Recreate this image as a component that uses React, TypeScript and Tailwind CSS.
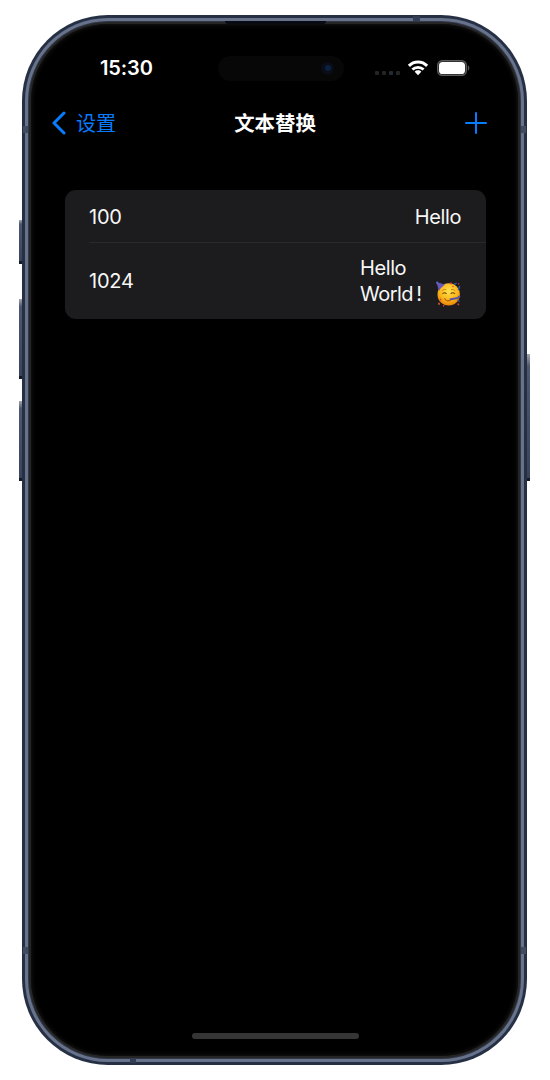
import React from 'react';

function WifiIcon() {
  return (
    <svg className="h-[16px] w-[22px]" viewBox="0 0 22 16" fill="none" stroke="#fff" strokeWidth="3">
      <path d="M1.9 5.9C7 .7 15 .7 20.1 5.9" />
      <path d="M5.4 9.6C8.5 6.5 13.5 6.5 16.6 9.6" strokeWidth="2.8" />
      <path d="M11 10.3c1.3 0 2.5.5 3.3 1.4L11 15.2l-3.3-3.5c.8-.9 2-1.4 3.3-1.4Z" fill="#fff" stroke="none" />
    </svg>
  );
}

function Battery() {
  return (
    <svg className="h-[16px] w-[33px]" viewBox="0 0 33 16">
      <rect x=".75" y=".75" width="28.5" height="14.5" rx="4.6" fill="#111" stroke="#5b5b5d" strokeWidth="1.5" />
      <rect x="2" y="2" width="26" height="12" rx="3.6" fill="#fff" />
      <path d="M30.8 5.3c2 .7 2 4.7 0 5.4Z" fill="#5b5b5d" />
    </svg>
  );
}

function PartyFace() {
  return (
    <svg className="h-[26px] w-[26px]" viewBox="0 0 26 26">
      <defs>
        <radialGradient id="face" cx=".5" cy=".35" r=".65">
          <stop offset="0" stopColor="#ffe04e" />
          <stop offset=".6" stopColor="#fbb91c" />
          <stop offset="1" stopColor="#e98208" />
        </radialGradient>
      </defs>
      <circle cx="12.7" cy="13.4" r="11.2" fill="url(#face)" />
      <path d="M.4 1.2 9.2 3.6C7 5 4.5 7.2 3 9.9Z" fill="#7354b5" />
      <path d="m1.5 3.6 3-1.3M2.3 6.8l4.6-3.5" stroke="#4b65bd" strokeWidth="1" />
      <circle cx="1.3" cy="1.7" r="1.3" fill="#5661b7" />
      <path d="M6.3 9.8c1-1.5 2.7-1.8 4-1M15 8.8c1.5-.8 3-.4 4 1" fill="none" stroke="#b57112" strokeWidth=".8" />
      <path d="M6.5 13c.8-1.6 3-1.6 3.9 0M14.8 13c.9-1.6 3.1-1.6 4 0" fill="none" stroke="#70430b" strokeWidth="1.1" />
      <path d="M8.5 17.2c1.3 2.7 3.8 3.5 5.9 1.8" fill="none" stroke="#b65e0a" strokeWidth="1.1" />
      <path d="m13.8 18.6 8-1.7 2.1-1.9" fill="none" stroke="#5951a1" strokeWidth="2" />
      <path d="m18 3.3 2.6-1.2M23.7 5l-1.4 4M23.5 20.5l-2-1.7" stroke="#35549b" strokeWidth="1.5" />
      <path d="M14 1.5h2v1.7h-2zM22 2.2h1.3v1.3H22zM2 21.7h2v2H2zM7 24h1.3v1.5H7zM21.5 22.5h1.7v1.7h-1.7z" fill="#ce4338" />
      <circle cx="17" cy="5.5" r=".8" fill="#db523c" />
      <circle cx="4.6" cy="18.5" r=".9" fill="#d64e36" />
    </svg>
  );
}

function SideButton({ className }: { className: string }) {
  return (
    <div
      className={`absolute w-[3px] border-b-[3px] border-[#141b29] bg-linear-to-b from-[#a5a6ab] via-[#4b586f] via-10% to-[#38445c] ${className}`}
    />
  );
}

function StatusBar() {
  return (
    <div className="flex h-[28px] items-center pr-[48px] pl-[69px]">
      <div className="w-[118px] text-[20px] font-semibold tracking-[-0.1px]">15:30</div>
      <div className="flex h-[25px] w-[126px] items-center justify-end rounded-full bg-[#070707] pr-[10px]">
        <div className="flex size-[13px] items-center justify-center rounded-full bg-[#0a0d15]">
          <div className="size-[6px] rounded-full bg-[#0b2144]" />
        </div>
      </div>
      <div className="ml-auto flex items-center">
        <div className="mt-[9px] mr-[7px] flex gap-[3px]">
          <i className="size-[4px] rounded-[1px] bg-[#242426]" />
          <i className="size-[4px] rounded-[1px] bg-[#242426]" />
          <i className="size-[4px] rounded-[1px] bg-[#242a35]" />
          <i className="size-[4px] rounded-[1px] bg-[#242426]" />
        </div>
        <WifiIcon />
        <span className="ml-[8px] flex"><Battery /></span>
      </div>
    </div>
  );
}

function NavBar() {
  return (
    <header className="mt-[27px] grid h-[28px] grid-cols-[1fr_auto_1fr] items-center pr-[31px] pl-[21px] text-[20px] leading-none">
      <button className="flex items-center text-[#087cff]">
        <svg className="h-[24px] w-[14px]" viewBox="0 0 14 24" fill="none" stroke="currentColor" strokeWidth="3" strokeLinecap="round" strokeLinejoin="round">
          <path d="M12 2 2 12l10 10" />
        </svg>
        <span className="ml-[10px] pt-[2px]">设置</span>
      </button>
      <h1 className="translate-x-[5.5px] pt-[2px] text-[20.4px] font-bold">文本替换</h1>
      <button className="justify-self-end text-[#087cff]" aria-label="添加">
        <svg className="size-[22px]" viewBox="0 0 22 22" fill="none" stroke="currentColor" strokeWidth="2" strokeLinecap="round">
          <path d="M11 1v20M1 11h20" />
        </svg>
      </button>
    </header>
  );
}

function ReplacementList() {
  return (
    <section className="mr-[32px] ml-[34px] mt-[53px] h-[129px] overflow-hidden rounded-[11px] bg-[#1c1c1e] pl-[24px] text-[20px] tracking-[-0.2px] text-[#f7f7f7]">
      <div className="flex h-[53px] items-center justify-between border-b border-[#29292b] pt-[2px] pr-[25px]">
        <span>100</span>
        <span className="tracking-[-0.4px]">Hello</span>
      </div>
      <div className="flex h-[76px] items-center justify-between pr-[24px]">
        <span>1024</span>
        <div className="w-[102px] leading-[26px]">
          <div className="tracking-[-0.4px]">Hello</div>
          <div className="flex h-[26px] items-center justify-between"><span className="tracking-[-0.5px]">World<span className="ml-[3px]">!</span></span><PartyFace /></div>
        </div>
      </div>
    </section>
  );
}

export default function App() {
  return (
    <div className="relative h-[1080px] w-[550px] overflow-hidden bg-white pt-[15px] pl-[22px] font-['Inter','Noto_Sans_CJK_SC',sans-serif] text-white">
      <SideButton className="top-[220px] left-[19px] h-[44px]" />
      <SideButton className="top-[299px] left-[19px] h-[80px]" />
      <SideButton className="top-[401px] left-[19px] h-[80px]" />
      <SideButton className="top-[354px] left-[527px] h-[127px]" />
      <div className="h-[1050px] w-[505px] rounded-[86px] bg-[#263044] p-[3px]">
        <div className="h-full rounded-[83px] bg-[#68728b] p-[3px]">
          <div className="h-full rounded-[80px] bg-[#30394a] p-px">
            <div className="h-full rounded-[79px] bg-[#252525] p-[2px]">
              <main className="flex h-full flex-col rounded-[77px] bg-black pt-[30px] pb-[17px] shadow-[inset_0_0_5px_#1d1d1d]">
                <StatusBar />
                <NavBar />
                <ReplacementList />
                <div className="mt-auto ml-[1px] h-[6px] w-[167px] self-center rounded-full bg-[#353536]" />
              </main>
            </div>
          </div>
        </div>
      </div>
      <div className="absolute top-[21px] left-[225px] h-[3px] w-[101px] rounded-b bg-[#080b13]" />
      <div className="absolute top-[16px] left-[413px] h-[5px] w-[7px] bg-[#343d51]" />
      <div className="absolute top-[1058px] left-[130px] h-[5px] w-[6px] bg-[#343d51]" />
      <div className="absolute top-[126px] left-[23px] h-[7px] w-[5px] bg-[#414b60]" />
      <div className="absolute top-[126px] left-[521px] h-[7px] w-[5px] bg-[#414b60]" />
      <div className="absolute top-[947px] left-[23px] h-[7px] w-[5px] bg-[#414b60]" />
      <div className="absolute top-[947px] left-[521px] h-[7px] w-[5px] bg-[#414b60]" />
    </div>
  );
}
